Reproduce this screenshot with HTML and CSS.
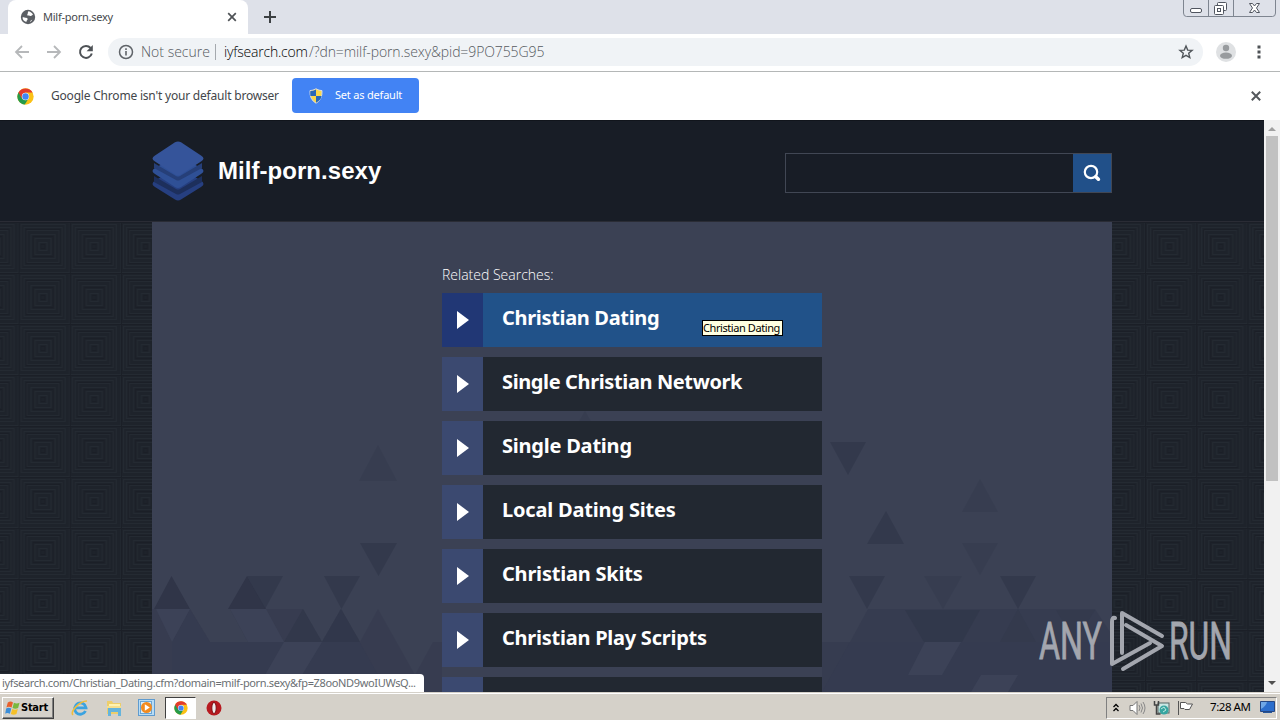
FILE: index.html
```html
<!DOCTYPE html>
<html lang="en">
<head>
<meta charset="utf-8">
<title>Milf-porn.sexy</title>
<link rel="stylesheet" href="styles.css">
</head>
<body>
<svg class="defs" width="0" height="0">
  <defs>
    <symbol id="chrome" viewBox="0 0 48 48">
      <circle cx="24" cy="24" r="23" fill="#fbc116"/>
      <path d="M24 24 4.100 12.500A23 23 0 0 0 22 46.900L33 29Z" fill="#259b4a"/>
      <path d="M14 30 4.100 12.500A23 23 0 0 1 44 13H24Z" fill="#e33b2e"/>
      <circle cx="24" cy="24" r="10.500" fill="#f4f6fa"/>
      <circle cx="24" cy="24" r="9" fill="#4285f4"/>
    </symbol>
  </defs>
</svg>
<div class="screen">
  <header class="tabstrip">
    <div class="tab">
      <svg class="globe" viewBox="0 0 16 16" width="16" height="16"><circle cx="8" cy="8" r="7.200" fill="#5b5f64"/><path d="M2.600 8.300c1.200-.2 2 .4 3.600.5 1 .1 1.600.8 1.400 1.600-.3.8-1.300 1-1.200 2.600C3.900 12.500 2.300 10.500 2.600 8.300ZM8.400 2.300c1.200.2 3.600 1.300 4.600 3.300-1 .5-1.500 1.700-2.700 1.400-1.100-.3-2.300.2-2.900-.7-.5-.9.700-1.400.4-2.200-.1-.6.200-1.200.6-1.800ZM10 13c.2-1.500 1.500-1.600 2.300-2.500-.3 1.200-1.200 2-2.300 2.500Z" fill="#fff"/></svg>
      <span class="tab-title">Milf-porn.sexy</span>
      <svg class="tab-close" viewBox="0 0 10 10" width="10" height="10"><path d="M1.200 1.200 8.800 8.800M8.800 1.200 1.200 8.800" stroke="#4e5256" stroke-width="1.700"/></svg>
    </div>
    <svg class="newtab" viewBox="0 0 12 12" width="12" height="12"><path d="M6 0v12M0 6h12" stroke="#3c4043" stroke-width="2"/></svg>
    <svg class="winbtns" viewBox="0 0 94 17" width="94" height="17">
      <path d="M.5 0v13q0 3.500 3 3.500h86q3 0 3-3.500V0M25.500 0v16M50.500 0v16" fill="none" stroke="#7e8590"/>
      <rect x="7.500" y="8.500" width="11" height="4" rx="1.500" fill="#fff" stroke="#50555f"/>
      <rect x="34.500" y="2.500" width="9" height="8" rx="1" fill="#fff" stroke="#50555f"/>
      <rect x="31.500" y="5.500" width="9" height="9" rx="1" fill="#fff" stroke="#50555f"/>
      <rect x="34.500" y="8.500" width="3" height="3" fill="#fff" stroke="#50555f"/>
      <path d="M66.500 3.500h3l2 2.500 2-2.500h3l-3 4.500 3 4.500h-3l-2-2.500-2 2.500h-3l3-4.500Z" fill="#fff" stroke="#50555f"/>
    </svg>
  </header>
  <div class="toolbar">
    <svg class="nav" viewBox="0 0 16 16" width="16" height="16"><path d="M15 8H2.500M8 2 2 8l6 6" fill="none" stroke="#b6b8ba" stroke-width="1.800"/></svg>
    <svg class="nav" viewBox="0 0 16 16" width="16" height="16"><path d="M1 8h12.500M8 2l6 6-6 6" fill="none" stroke="#b6b8ba" stroke-width="1.800"/></svg>
    <svg class="nav" viewBox="0 0 16 16" width="16" height="16"><path d="M12.600 4A6 6 0 1 0 13.800 9.500" fill="none" stroke="#4e5256" stroke-width="2"/><path d="M14.800 1v6.200H8.600Z" fill="#4e5256"/></svg>
    <div class="omnibox">
      <svg viewBox="0 0 16 16" width="16" height="16"><circle cx="8" cy="8" r="6.500" fill="none" stroke="#5f6368" stroke-width="1.500"/><path d="M8 7v4.500M8 4.300v1.700" stroke="#5f6368" stroke-width="1.600"/></svg>
      <span class="secure">Not secure</span>
      <span class="bar"></span>
      <span class="host">iyfsearch.com</span><span class="path">/?dn=milf-porn.sexy&amp;pid=9PO755G95</span>
      <svg class="star" viewBox="0 0 16 16" width="16" height="16"><path d="M8 2 9.700 6.100l4.400.3-3.400 2.900 1.100 4.300L8 11.300l-3.800 2.300 1.100-4.300L1.900 6.400l4.400-.3Z" fill="none" stroke="#50555a" stroke-width="1.400"/></svg>
    </div>
    <svg class="avatar" viewBox="0 0 20 20" width="20" height="20"><circle cx="10" cy="10" r="10" fill="#dfe1e3"/><circle cx="10" cy="6" r="3.200" fill="#989b9e"/><ellipse cx="10" cy="13.700" rx="6" ry="3.100" fill="#989b9e"/></svg>
    <svg class="dots" viewBox="0 0 4 14" width="4" height="14"><path d="M.5.500h3v3h-3zM.5 5.500h3v3h-3zM.5 10.500h3v3h-3z" fill="#4e5256"/></svg>
  </div>
  <div class="infobar">
    <svg width="17" height="17"><use href="#chrome"/></svg>
    <span class="info-text">Google Chrome isn't your default browser</span>
    <div class="default-btn">
      <svg viewBox="0 0 14 16" width="14" height="16"><path d="M7 .8Q10 2.600 13 2.600 13.600 11.500 7 15.200.4 11.500 1 2.600 4 2.600 7 .8Z" fill="#f9d84a" stroke="#d8dde3"/><path d="M7 1.500V8H1.400Q1 5 1.400 3 4 3 7 1.500ZM7 8h5.600Q12 12 7 14.700Z" fill="#2868b8"/></svg>
      <span>Set as default</span>
    </div>
    <svg class="info-close" viewBox="0 0 10 10" width="10" height="10"><path d="M.8.800 9.200 9.200M9.200.800.800 9.200" stroke="#54585c" stroke-width="2"/></svg>
  </div>
  <div class="viewport">
    <main class="page">
      <svg class="weave" width="1264" height="471">
        <defs><pattern id="sq" width="51.200" height="51" patternUnits="userSpaceOnUse" x="17.600" y="0">
          <rect width="51.200" height="51" fill="#1e232b"/>
          <g fill="none" stroke="#242a32"><path d="M0 0V51M0 .5H51.200"/><rect x="3.500" y="3.500" width="44" height="44"/><rect x="6.500" y="6.500" width="38" height="38"/><rect x="9.500" y="9.500" width="32" height="32"/><rect x="13.500" y="13.500" width="24" height="24"/><rect x="17.500" y="17.500" width="16" height="16"/><rect x="21.500" y="21.500" width="8" height="8"/></g>
          <g fill="none" stroke="#1b1f27"><path d="M1.500 0V51M0 1.500H51.200"/><rect x="8.500" y="8.500" width="34" height="34"/><rect x="15.500" y="15.500" width="20" height="20"/><rect x="23.500" y="23.500" width="4" height="4"/></g>
        </pattern></defs>
        <rect width="1264" height="471" fill="url(#sq)"/>
      </svg>
      <div class="masthead">
        <svg class="logo" viewBox="0 0 52 60" width="52" height="60">
          <path d="M3 39.500 23 28q3-1.500 6 0l20 11.500q5 3.500 0 6.500L29 58.500q-3 1.800-6 0L3 46q-5-3 0-6.500Z" fill="#263f80"/>
          <path d="M2 35 24 48q2 1 4 0L50 35V41L28 53q-2 1-4 0L2 41Z" fill="#1d2f5c"/>
          <path d="M3 27 23 16q3-1.500 6 0l20 11q5 3 0 6L29 46q-3 1.800-6 0L3 33q-5-3 0-6Z" fill="#2f5096"/>
          <path d="M2 22 24 35q2 1 4 0L50 22V27L28 39q-2 1-4 0L2 27Z" fill="#263f78"/>
          <path d="M3 14.500 23 1.200q3-1.600 6 0l20 13.300q5 3 0 6L29 33.500q-3 1.800-6 0L3 20.500q-5-3 0-6Z" fill="#35549a"/>
        </svg>
        <h1 class="brand">Milf-porn.sexy</h1>
        <div class="search"><div class="search-input"></div><div class="search-btn"><svg viewBox="0 0 18 18" width="18" height="18"><circle cx="8" cy="8" r="6.200" fill="none" stroke="#fff" stroke-width="2.200"/><path d="m12.800 12.800 2.600 2.400" stroke="#fff" stroke-width="3.600" stroke-linecap="round"/></svg></div></div>
      </div>
      <section class="panel">
        <svg class="facets" viewBox="152 222 960 470" width="960" height="470">
          <path d="M190 609 210 642H248L230 609H303L322 642 341 609 360 642 378 609 415 675 433 642H442V692H152V609Z" fill="#353b4f" opacity=".65"/>
          <path d="M822 642H850L868 609H1095L1112 635V692H822Z" fill="#353b4f" opacity=".7"/>
          <path d="M190 609 210 642H322L341 609 378 675 388 692H172V642Z" fill="#343a4f" opacity=".5"/>
          <path d="M850 642H1112V692H822Z" fill="#343a4f" opacity=".5"/>
          <path d="M171.500 576 190 609H154ZM247 576 266 609H228Z" fill="#303548"/>
          <g fill="#303548" opacity=".65"><path d="M247 576H283L265 609ZM324 576H360L341.500 609ZM303 609 322 642H284ZM341 609 360 642H322ZM360 543H397L378.500 576Z"/><path d="M1000 576H1036L1018 609ZM886 511 904 544H867ZM830 442H866L848 475ZM849 576H885L867 609ZM905 610H980L962 642H924Z"/></g>
          <path d="M378 445 397 481H359ZM585 411 604 444H566ZM980 479 998 512H962ZM962 543H998L980 575ZM924 576H962L943 609ZM1018 609 1036 642H1000ZM1056 610H1095L1075 642Z" fill="#303548" opacity=".28"/>
          <path d="M156 609H190L172 642ZM230 609H266L284 642H248ZM284 642H322L302 675H265ZM925 642H961L942 675H908ZM981 675H1018L1008 692H971Z" fill="#3c4257"/>
        </svg>
        <div class="results">
          <p class="label">Related Searches:</p>
          <a class="item active"><span class="arrow"></span><span class="name n1">Christian Dating</span></a>
          <a class="item"><span class="arrow"></span><span class="name n2">Single Christian Network</span></a>
          <a class="item"><span class="arrow"></span><span class="name n3">Single Dating</span></a>
          <a class="item"><span class="arrow"></span><span class="name n4">Local Dating Sites</span></a>
          <a class="item"><span class="arrow"></span><span class="name n5">Christian Skits</span></a>
          <a class="item"><span class="arrow"></span><span class="name n6">Christian Play Scripts</span></a>
          <a class="item"><span class="arrow"></span></a>
        </div>
      </section>
    </main>
    <div class="scrollbar"><svg class="up" viewBox="0 0 8 4" width="8" height="4"><path d="M0 4 4 0 8 4Z" fill="#a0a0a0"/></svg><div class="thumb"></div><svg class="down" viewBox="0 0 8 4" width="8" height="4"><path d="M0 0H8L4 4Z" fill="#505050"/></svg></div>
    <div class="tooltip">Christian Dating</div>
    <div class="status">iyfsearch.com/Christian_Dating.cfm?domain=milf-porn.sexy&amp;fp=Z8ooND9woIUWsQ...</div>
    <svg class="watermark" viewBox="1030 600 216 80" width="216" height="80">
      <g class="wm-text"><text x="1039" y="659" textLength="63" lengthAdjust="spacingAndGlyphs">ANY</text><text x="1169" y="659" textLength="63" lengthAdjust="spacingAndGlyphs">RUN</text></g>
      <g fill="none" stroke="#a3a6ae" stroke-width="4" stroke-linecap="round" stroke-linejoin="round"><path d="M1115 618Q1112 617 1112 622V664L1150 643"/><path d="M1122 653V613L1162 636M1126 625 1162 646 1123 669"/></g>
    </svg>
  </div>
  <footer class="taskbar">
    <div class="start"><svg viewBox="0 0 16 16" width="15" height="16"><path d="M3 2q3-2 5.500 0L7 7.500Q4 6 1.500 7.500Z" fill="#e8602c"/><path d="M9.500 2.500q3 1.500 6 0L14 8q-3 1.500-6 0Z" fill="#79b83d"/><path d="M1.200 8.500q2.500-1.500 5.500 0L5.200 14q-3-1.500-5 0Z" fill="#3c8ed8"/><path d="M7.700 9q3 1.500 6 0l-1.500 5.500q-3 1.500-6 0Z" fill="#f5c028"/></svg><span>Start</span></div>
    <svg class="t-ie" viewBox="0 0 18 18" width="18" height="18"><path d="M14.500 12A5.700 5.700 0 1 1 15 8.800H5" fill="none" stroke="#3ba3e0" stroke-width="2.800"/><path d="M2 16C-1 13 8 2 16 2" fill="none" stroke="#f0bd3c" stroke-width="1.600"/></svg>
    <svg class="t-folder" viewBox="0 0 18 18" width="18" height="18"><path d="M2 2h5l1 2h8v11H2Z" fill="#edce6b"/><path d="M4 5h11v3H4z" fill="#fff3b0"/><path d="M3 9h13v8h-3v-4H6v4H3Z" fill="#65b4dc"/><path d="M2 7h14v2H2z" fill="#f5df8e"/></svg>
    <svg class="t-media" viewBox="0 0 17 17" width="17" height="17"><rect x=".5" y=".5" width="16" height="16" fill="#b8dcf5" stroke="#5f9bcf"/><rect x="2.500" y="2.500" width="11" height="12" fill="#d8edfa" stroke="#6ba5d4"/><circle cx="8.500" cy="8.500" r="5.500" fill="#f28a1e"/><path d="M6.800 5.300 11.800 8.500l-5 3.200Z" fill="#fff"/></svg>
    <div class="task-active"><svg width="14" height="14"><use href="#chrome"/></svg></div>
    <svg class="t-opera" viewBox="0 0 16 16" width="16" height="16"><circle cx="8" cy="8" r="7.500" fill="#b71a20"/><ellipse cx="8" cy="8" rx="2.200" ry="5.600" fill="#eee" stroke="#7d0c10"/></svg>
    <div class="tray">
      <svg class="chev" viewBox="0 0 6 9" width="6" height="9"><path d="M.5 4 3 1.500 5.500 4M.5 8 3 5.500 5.500 8" fill="none" stroke="#000" stroke-width="1.300"/></svg>
      <svg class="spk" viewBox="0 0 17 16" width="17" height="16"><path d="M1 5.500h3l4-4v13l-4-4H1Z" fill="#fff" stroke="#777"/><path d="M10 5q2 3 0 6M12 3.500q3 4.500 0 9M14 2q4 6 0 12" fill="none" stroke="#888"/></svg>
      <svg class="net" viewBox="0 0 17 16" width="17" height="16"><rect x="5" y="3" width="11" height="10" fill="#c9e8e4" stroke="#566"/><path d="M1.500 1v4h4V1M3.500 5v9h4" fill="none" stroke="#444" stroke-width="1.500"/><circle cx="11" cy="10" r="4.500" fill="#36a5a0"/><path d="m8 9 3-2 2 3-3 2" fill="none" stroke="#bfe8df"/></svg>
      <svg class="flag" viewBox="0 0 17 16" width="17" height="16"><path d="M1.500 1v14M3.500 2.500h5l2 1.500h5l-3 5.500H8l-1-1H3.500Z" fill="#fff" stroke="#555"/></svg>
      <span class="clock">7:28 AM</span>
      <svg class="desk" viewBox="0 0 15 13" width="15" height="13"><path d="M.5.500h14v10H.5Z" fill="#2c6ecc" stroke="#254783"/><path d="M1 8Q6 5 7 1H1Z" fill="#6fa7e6"/><path d="M3 11h9v1H3z" fill="#26569a"/></svg>
    </div>
  </footer>
</div>
</body>
</html>
```
FILE: styles.css
```css
* { box-sizing: border-box; }
body { margin: 0; font-family: "Noto Sans", "Open Sans", sans-serif; }
svg { display: block; flex: none; }
.defs { position: absolute; }
.screen { width: 1280px; height: 720px; overflow: hidden; display: flex; flex-direction: column; background: #fff; }
.screen span { white-space: nowrap; }

.tabstrip { height: 34px; flex: none; background: #dee1e9; display: flex; align-items: flex-start; padding-left: 8px; }
.tab { width: 240px; height: 34px; background: #fff; border-radius: 8px 8px 0 0; display: flex; align-items: center; padding: 0 11px 0 12px; }
.tab-title { margin: 0 0 2px 7px; font-size: 11px; letter-spacing: -.25px; color: #45484c; }
.tab-close { margin-left: auto; }
.newtab { margin: 11px 0 0 16px; }
.winbtns { margin: 0 3px 0 auto; }

.toolbar { height: 38px; flex: none; display: flex; align-items: center; padding: 0 19px 2px 14px; border-bottom: 1px solid #b4b7b7; }
.nav { margin-right: 16px; }
.omnibox { width: 1095px; height: 28px; margin-left: -2px; border-radius: 14px; background: #f0f3f6; display: flex; align-items: center; padding: 0 9px 0 10px; font: 300 14px "Open Sans", "Noto Sans", sans-serif; color: #55595e; }
.secure { width: 67px; margin-left: 7px; }
.bar { width: 1px; height: 16px; margin: 0 8px 0 7px; background: #a5a9ae; }
.host { width: 85px; color: #000; letter-spacing: -.2px; }
.path { letter-spacing: -.1px; }
.star { margin-left: auto; }
.avatar { margin-left: 13px; }
.dots { margin-left: auto; }

.infobar { height: 48px; flex: none; display: flex; align-items: center; padding: 0 19px 0 17px; }
.info-text { margin: 0 0 2px 17px; width: 241px; font-size: 12px; letter-spacing: -.2px; color: #43464a; }
.default-btn { width: 127px; height: 35px; border-radius: 4px; background: #4283f4; display: flex; align-items: center; padding-left: 17px; gap: 12px; color: #fff; font-size: 11px; letter-spacing: -.2px; margin-bottom: 1px; }
.default-btn span { margin-bottom: 2px; }
.info-close { margin-left: auto; }

.viewport { height: 572px; flex: none; display: flex; position: relative; overflow: hidden; }
.page { width: 1264px; height: 572px; position: relative; overflow: hidden; }
.weave { position: absolute; left: 0; top: 101px; }
.masthead { height: 102px; background: #181d26; border-bottom: 1px solid #2a2c35; border-top: 1px solid #11151c; padding: 0 152px; display: flex; align-items: center; position: relative; }
.brand { margin: 0 0 0 14px; font: bold 24px "Liberation Sans", Arial, sans-serif; color: #fff; letter-spacing: .05px; }
.search { width: 327px; height: 40px; margin: 4px 0 0 auto; border: 1px solid #414754; display: flex; }
.search-input { flex: 1; }
.search-btn { width: 38px; background: #215089; display: flex; align-items: center; justify-content: center; }
.panel { width: 960px; height: 470px; margin: 0 auto; background: #3b4154; position: relative; overflow: hidden; }
.facets { position: absolute; left: 0; top: 0; }
.results { width: 380px; margin: 0 auto; padding-top: 43px; display: flex; flex-direction: column; gap: 10px; position: relative; }
.label { margin: 0 0 -2px; height: 20px; font: 300 14px/20px "Open Sans", "Noto Sans", sans-serif; color: #fff; }
.item { height: 54px; flex: none; display: flex; background: #222831; color: #fff; }
.arrow { width: 41px; background: #3b4970; display: flex; align-items: center; padding-left: 15px; }
.arrow::before { content: ""; border-left: 12px solid #fff; border-top: 9.5px solid transparent; border-bottom: 9.5px solid transparent; }
.name { margin-left: 19px; font: bold 20px/50px "Noto Sans", sans-serif; }
.n1 { letter-spacing: -.33px; }
.n2 { letter-spacing: -.38px; }
.n3, .n5 { letter-spacing: -.22px; }
.n4 { letter-spacing: -.18px; }
.n6 { letter-spacing: -.25px; }
.active { background: #215289; }
.active .arrow { background: #213775; }

.scrollbar { width: 16px; background: #f1f1f1; display: flex; flex-direction: column; align-items: center; }
.up { margin: 7px 0 5px; }
.thumb { width: 12px; height: 345px; background: #c1c1c1; }
.down { margin: auto 0 7px; }

.tooltip { position: absolute; left: 702px; top: 200px; width: 81px; height: 16px; border: 1px solid #000; background: #ffffe1; color: #000; font-size: 11px; line-height: 14px; letter-spacing: -.42px; white-space: nowrap; }
.status { position: absolute; left: 0; bottom: 0; width: 424px; height: 18px; padding-left: 2px; border-radius: 0 4px 0 0; background: #fff; color: #6b6f73; font-size: 11px; line-height: 18px; letter-spacing: -.35px; white-space: nowrap; }
.watermark { position: absolute; left: 1030px; top: 480px; }
.wm-text { font-family: Roboto, sans-serif; font-size: 51px; fill: #a3a6ae; stroke: #a3a6ae; stroke-width: .8px; }

.taskbar { height: 28px; flex: none; background: #d5d1c9; border-top: 1px solid #d5d1c9; box-shadow: inset 0 1px #fff; display: flex; align-items: center; padding: 2px 3px 0 2px; }
.start { width: 52px; height: 22px; display: flex; align-items: center; padding-left: 2px; gap: 1px; border: 1px solid; border-color: #fff #404040 #404040 #fff; box-shadow: inset -1px -1px #808080; font: bold 11px "DejaVu Sans Condensed", "DejaVu Sans", sans-serif; letter-spacing: -.25px; color: #000; }
.t-ie { margin-left: 17px; }
.t-folder { margin-left: 16px; }
.t-media { margin-left: 15px; }
.task-active { width: 31px; height: 22px; margin-left: 10px; background: #fff; border: 1px solid; border-color: #404040 #fff #fff #404040; display: flex; align-items: center; justify-content: center; }
.t-opera { margin-left: 10px; }
.tray { width: 171px; height: 22px; margin-left: auto; border: 1px solid; border-color: #808080 #fff #fff #808080; display: flex; align-items: center; padding-left: 6px; }
.spk { margin-left: 10px; }
.net { margin-left: 7px; }
.flag { margin-left: 7px; }
.clock { margin: 0 0 2px 16px; width: 50px; font-size: 11.5px; letter-spacing: -.45px; color: #000; }
```
